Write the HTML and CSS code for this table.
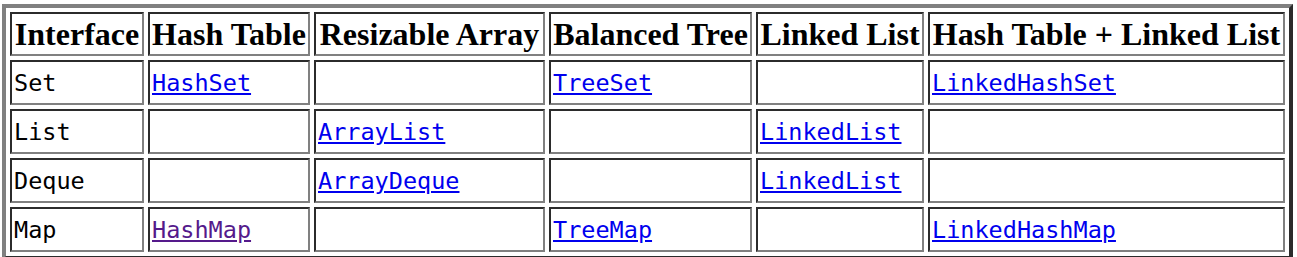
FILE: index.html
```html
<!DOCTYPE html>
<html>
<head>
<meta charset="utf-8">
<link rel="stylesheet" href="styles.css">
</head>
<body>
<table class="impl">
  <thead>
    <tr>
      <th class="c1">Interface</th>
      <th class="c2">Hash Table</th>
      <th class="c3">Resizable Array</th>
      <th class="c4">Balanced Tree</th>
      <th class="c5">Linked List</th>
      <th class="c6">Hash Table + Linked List</th>
    </tr>
  </thead>
  <tbody>
    <tr>
      <td>Set</td>
      <td><a href="#hashset">HashSet</a></td>
      <td></td>
      <td><a href="#treeset">TreeSet</a></td>
      <td></td>
      <td><a href="#linkedhashset">LinkedHashSet</a></td>
    </tr>
    <tr>
      <td>List</td>
      <td></td>
      <td><a href="#arraylist">ArrayList</a></td>
      <td></td>
      <td><a href="#linkedlist">LinkedList</a></td>
      <td></td>
    </tr>
    <tr>
      <td>Deque</td>
      <td></td>
      <td><a href="#arraydeque">ArrayDeque</a></td>
      <td></td>
      <td><a href="#linkedlist">LinkedList</a></td>
      <td></td>
    </tr>
    <tr>
      <td>Map</td>
      <td><a class="visited" href="#hashmap">HashMap</a></td>
      <td></td>
      <td><a href="#treemap">TreeMap</a></td>
      <td></td>
      <td><a href="#linkedhashmap">LinkedHashMap</a></td>
    </tr>
  </tbody>
</table>
</body>
</html>
```
FILE: styles.css
```css
html, body {
  margin: 0;
  padding: 0;
  background: #ffffff;
}

body {
  padding: 4px 0 0 2px;
}

.impl {
  border-collapse: separate;
  border-spacing: 4px;
  border-style: solid;
  border-width: 4px;
  border-color: #808080 #2b2b2b #2b2b2b #808080;
  width: 1291px;
  table-layout: fixed;
  background: #ffffff;
}

.impl th,
.impl td {
  box-sizing: border-box;
  border-style: solid;
  border-width: 2px;
  border-color: #2b2b2b #808080 #808080 #2b2b2b;
  padding: 2px;
  overflow: hidden;
  white-space: nowrap;
}

.impl th {
  height: 44px;
  font-family: "Liberation Serif", "Times New Roman", serif;
  font-weight: bold;
  font-size: 32px;
  line-height: 36px;
  color: #000000;
  text-align: center;
  vertical-align: middle;
}

.impl td {
  height: 45px;
  font-family: "DejaVu Sans Mono", "Liberation Mono", monospace;
  font-size: 23.5px;
  line-height: 36px;
  color: #000000;
  text-align: left;
  vertical-align: middle;
}

.c1 { width: 134px; }
.c2 { width: 162px; }
.c3 { width: 231px; }
.c4 { width: 203px; }
.c5 { width: 168px; }
.c6 { width: 357px; }

.impl a {
  color: #0000ee;
  text-decoration: underline;
}

.impl a.visited {
  color: #551a8b;
}
```
